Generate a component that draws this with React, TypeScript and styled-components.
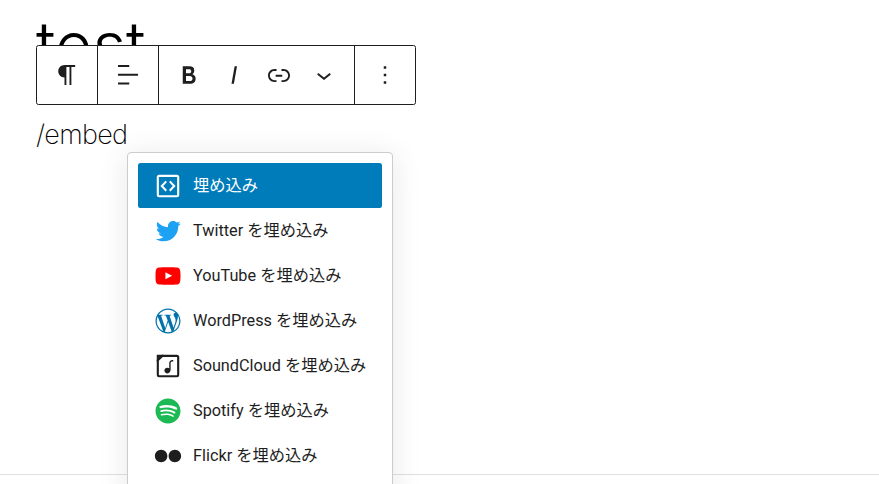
import React from 'react';
import styled, { createGlobalStyle } from 'styled-components';

const GlobalStyle = createGlobalStyle`
  html, body {
    margin: 0;
    padding: 0;
    background: #fff;
  }
`;

const Page = styled.div`
  position: relative;
  display: grid;
  grid-template-rows: 474px 10px;
  width: 879px;
  height: 484px;
  overflow: hidden;
  font-family: Inter, "Liberation Sans", sans-serif;
  color: #1e1e1e;
`;

const Canvas = styled.main`
  padding: 0 0 0 36px;
  color: #000;
`;

const Title = styled.h1`
  margin: 0;
  height: 118px;
  padding-top: 8px;
  box-sizing: border-box;
  font-size: 65px;
  line-height: 76px;
  font-weight: 300;
`;

const Paragraph = styled.p`
  margin: 0;
  font-size: 27px;
  line-height: 34px;
  font-weight: 200;
  letter-spacing: -0.7px;
`;

const Footer = styled.footer`
  border-top: 1px solid #e0e0e0;
  background: #fff;
`;

const Toolbar = styled.div`
  position: absolute;
  top: 45px;
  left: 36px;
  display: flex;
  height: 60px;
  box-sizing: border-box;
  border: 1.25px solid #1e1e1e;
  border-radius: 2.5px;
  background: #fff;
`;

const ToolGroup = styled.div<{ $padded?: boolean }>`
  display: flex;
  align-items: center;
  padding: ${(p) => (p.$padded ? '0 7.5px' : '0')};
  border-right: 1.25px solid #1e1e1e;

  &:last-child {
    border-right: none;
  }
`;

const ToolButton = styled.button<{ $wide?: boolean }>`
  display: flex;
  align-items: center;
  justify-content: center;
  width: ${(p) => (p.$wide ? '60px' : '45px')};
  height: 100%;
  padding: 0;
  border: none;
  background: none;
  color: #1e1e1e;

  svg {
    width: 30px;
    height: 30px;
    fill: currentColor;
  }
`;

const Popover = styled.div`
  position: absolute;
  top: 152px;
  left: 127px;
  width: 266px;
  height: 360px;
  box-sizing: border-box;
  padding: 10px;
  border: 1px solid #ccc;
  border-radius: 4px;
  background: #fff;
  box-shadow: 0 3px 30px rgba(25, 30, 35, 0.1);
`;

const Option = styled.div<{ $selected?: boolean }>`
  display: flex;
  align-items: center;
  gap: 10px;
  height: 45px;
  padding-left: 15px;
  border-radius: 2.5px;
  background: ${(p) => (p.$selected ? '#007cba' : 'transparent')};
  color: ${(p) => (p.$selected ? '#fff' : '#1e1e1e')};
  font-family: Roboto, "Noto Sans CJK JP", sans-serif;
  font-size: 16.25px;
  white-space: nowrap;

  svg {
    flex: none;
    width: 30px;
    height: 30px;
    fill: currentColor;
  }
`;

const OptionLabel = styled.span`
  margin-top: -3px;
`;

const icons = {
  embed: (
    <svg viewBox="0 0 24 24">
      <path d="M5 3h14a2 2 0 0 1 2 2v14a2 2 0 0 1-2 2H5a2 2 0 0 1-2-2V5a2 2 0 0 1 2-2zm0 1.7a.3.3 0 0 0-.3.3v14c0 .2.1.3.3.3h14c.2 0 .3-.1.3-.3V5a.3.3 0 0 0-.3-.3H5z" />
      <path d="M10 7.7 5.9 12l4.1 4.3 1.2-1.1L8.2 12l3-3.2zM14 7.7l-1.2 1.1 3 3.2-3 3.2 1.2 1.1 4.1-4.3z" />
    </svg>
  ),
  twitter: (
    <svg viewBox="0 0 24 24" style={{ fill: '#1da1f2' }}>
      <path d="M22.23 5.924c-.736.326-1.527.547-2.357.646.847-.508 1.498-1.312 1.804-2.27-.793.47-1.67.812-2.606.996C18.325 4.484 17.258 4 16.078 4c-2.266 0-4.103 1.837-4.103 4.103 0 .322.036.635.106.935-3.41-.17-6.433-1.804-8.457-4.287-.353.607-.556 1.312-.556 2.064 0 1.424.724 2.68 1.825 3.415-.673-.022-1.305-.207-1.86-.514v.052c0 1.988 1.415 3.647 3.293 4.023-.344.095-.707.145-1.08.145-.265 0-.522-.026-.773-.074.522 1.63 2.038 2.817 3.833 2.85-1.404 1.1-3.174 1.757-5.096 1.757-.332 0-.66-.02-.98-.057 1.816 1.164 3.973 1.843 6.29 1.843 7.547 0 11.675-6.252 11.675-11.675 0-.178-.004-.355-.012-.53.802-.578 1.497-1.3 2.047-2.132z" />
    </svg>
  ),
  youtube: (
    <svg viewBox="0 0 24 24" style={{ fill: '#f00' }}>
      <path d="M21.8 8s-.195-1.377-.795-1.984c-.76-.797-1.613-.8-2.004-.847-2.798-.203-6.996-.203-6.996-.203h-.01s-4.197 0-6.996.202c-.39.046-1.242.05-2.003.846C2.395 6.623 2.2 8 2.2 8S2 9.62 2 11.24v1.517c0 1.618.2 3.237.2 3.237s.195 1.378.795 1.985c.76.797 1.76.77 2.205.855 1.6.153 6.8.2 6.8.2s4.203-.005 7-.208c.392-.047 1.244-.05 2.005-.847.6-.607.795-1.985.795-1.985s.2-1.618.2-3.237v-1.517C22 9.62 21.8 8 21.8 8zM9.935 14.595v-5.62l5.403 2.82-5.403 2.8z" />
    </svg>
  ),
  wordpress: (
    <svg viewBox="0 0 24 24" style={{ fill: '#0073aa' }}>
      <path d="M12.158,12.786L9.46,20.625c0.806,0.237,1.657,0.366,2.54,0.366c1.047,0,2.051-0.181,2.986-0.51 c-0.024-0.038-0.046-0.079-0.065-0.124L12.158,12.786z M3.009,12c0,3.559,2.068,6.634,5.067,8.092L3.788,8.341 C3.289,9.459,3.009,10.696,3.009,12z M18.069,11.546c0-1.112-0.399-1.881-0.741-2.48c-0.456-0.741-0.883-1.368-0.883-2.109 c0-0.826,0.627-1.596,1.51-1.596c0.04,0,0.078,0.005,0.116,0.007C16.472,3.904,14.34,3.009,12,3.009 c-3.141,0-5.904,1.612-7.512,4.052c0.211,0.007,0.41,0.011,0.579,0.011c0.94,0,2.396-0.114,2.396-0.114 C7.947,6.93,8.004,7.642,7.52,7.699c0,0-0.487,0.057-1.029,0.085l3.274,9.739l1.968-5.901l-1.401-3.838 C9.848,7.756,9.389,7.699,9.389,7.699C8.904,7.67,8.961,6.93,9.446,6.958c0,0,1.484,0.114,2.368,0.114 c0.94,0,2.397-0.114,2.397-0.114c0.485-0.028,0.542,0.684,0.057,0.741c0,0-0.488,0.057-1.029,0.085l3.249,9.665l0.897-2.996 C17.841,13.284,18.069,12.316,18.069,11.546z M19.889,7.686c0.039,0.286,0.06,0.593,0.06,0.924c0,0.912-0.171,1.938-0.684,3.22 l-2.746,7.94c2.673-1.558,4.47-4.454,4.47-7.771C20.991,10.436,20.591,8.967,19.889,7.686z M12,22C6.486,22,2,17.514,2,12 C2,6.486,6.486,2,12,2c5.514,0,10,4.486,10,10C22,17.514,17.514,22,12,22z" />
    </svg>
  ),
  soundcloud: (
    <svg viewBox="0 0 24 24">
      <path fillRule="evenodd" d="M7 3h12a2 2 0 0 1 2 2v14a2 2 0 0 1-2 2H5a2 2 0 0 1-2-2V7zm.8 1.7L4.7 7.8V19c0 .2.1.3.3.3h14c.2 0 .3-.1.3-.3V5c0-.2-.1-.3-.3-.3z" />
      <path d="M3 3h5.5L3 8.5z" />
      <path d="M15.9 7.2c-.8 0-1.7.1-2.3.7-.4.4-.6 1-.6 1.7v4.2c-.4-.3-.9-.5-1.5-.5-1.3 0-2.4 1-2.4 2.3s1.1 2.3 2.4 2.3c1 0 1.9-.6 2.2-1.5.3-.5.4-1.2.4-1.7V9.6c0-.4.1-.7.3-.9.3-.3.9-.3 1.5-.3h.3V7.2h-.3z" />
    </svg>
  ),
  spotify: (
    <svg viewBox="0 0 24 24" style={{ fill: '#1db954' }}>
      <path d="M12,2C6.477,2,2,6.477,2,12c0,5.523,4.477,10,10,10c5.523,0,10-4.477,10-10C22,6.477,17.523,2,12,2 M16.586,16.424 c-0.18,0.295-0.563,0.387-0.857,0.207c-2.348-1.435-5.304-1.76-8.785-0.964c-0.335,0.077-0.67-0.133-0.746-0.469 c-0.077-0.335,0.132-0.67,0.469-0.746c3.809-0.871,7.077-0.496,9.713,1.115C16.673,15.746,16.766,16.13,16.586,16.424 M17.81,13.7 c-0.226,0.367-0.706,0.482-1.072,0.257c-2.687-1.652-6.785-2.131-9.965-1.166C6.36,12.917,5.925,12.684,5.8,12.273 C5.675,11.86,5.908,11.425,6.32,11.3c3.632-1.102,8.147-0.568,11.234,1.328C17.92,12.854,18.035,13.335,17.81,13.7 M17.915,10.865 c-3.223-1.914-8.54-2.09-11.618-1.156C5.804,9.859,5.281,9.58,5.131,9.086c-0.149-0.495,0.129-1.017,0.624-1.167 c3.532-1.073,9.404-0.866,13.115,1.337c0.445,0.264,0.59,0.838,0.327,1.282C18.933,10.983,18.359,11.129,17.915,10.865" />
    </svg>
  ),
  flickr: (
    <svg viewBox="0 0 24 24">
      <path d="m6.5 7c-2.75 0-5 2.25-5 5s2.25 5 5 5 5-2.25 5-5-2.25-5-5-5zm11 0c-2.75 0-5 2.25-5 5s2.25 5 5 5 5-2.25 5-5-2.25-5-5-5z" />
    </svg>
  ),
};

const options = [
  { label: '埋め込み', icon: icons.embed, selected: true },
  { label: 'Twitter を埋め込み', icon: icons.twitter },
  { label: 'YouTube を埋め込み', icon: icons.youtube },
  { label: 'WordPress を埋め込み', icon: icons.wordpress },
  { label: 'SoundCloud を埋め込み', icon: icons.soundcloud },
  { label: 'Spotify を埋め込み', icon: icons.spotify },
  { label: 'Flickr を埋め込み', icon: icons.flickr },
];

const App: React.FC = () => {
  return (
    <Page>
      <GlobalStyle />
      <Canvas>
        <Title>test</Title>
        <Paragraph>/embed</Paragraph>
      </Canvas>
      <Footer />

      <Toolbar>
        <ToolGroup>
          <ToolButton $wide aria-label="段落">
            <svg viewBox="0 0 24 24">
              <path d="m9.99609 14v-.2251l.00391.0001v6.225h1.5v-14.5h2.5v14.5h1.5v-14.5h3v-1.5h-8.50391c-2.76142 0-5 2.23858-5 5 0 2.7614 2.23858 5 5 5z" />
            </svg>
          </ToolButton>
        </ToolGroup>
        <ToolGroup>
          <ToolButton $wide aria-label="配置">
            <svg viewBox="0 0 24 24">
              <path d="M13 5.5H4V4h9v1.5Zm7 7H4V11h16v1.5Zm-7 7H4V18h9v1.5Z" />
            </svg>
          </ToolButton>
        </ToolGroup>
        <ToolGroup $padded>
          <ToolButton aria-label="太字">
            <svg viewBox="0 0 24 24">
              <path d="M14.7 11.3c1-.6 1.5-1.6 1.5-3 0-2.3-1.3-3.4-4-3.4H7v14h5.8c1.4 0 2.5-.3 3.3-1 .8-.7 1.2-1.7 1.2-2.9.1-1.9-.8-3.1-2.6-3.7zm-5.1-4h2.3c.6 0 1.1.1 1.4.4.3.3.5.7.5 1.2s-.2 1-.5 1.2c-.3.3-.8.4-1.4.4H9.6V7.3zm4.6 9c-.4.3-1 .4-1.7.4H9.6v-3.9h2.9c.7 0 1.3.2 1.7.5.4.3.6.8.6 1.5s-.2 1.2-.6 1.5z" />
            </svg>
          </ToolButton>
          <ToolButton aria-label="イタリック">
            <svg viewBox="0 0 24 24">
              <path d="M12.5 5L10 19h1.9l2.5-14z" />
            </svg>
          </ToolButton>
          <ToolButton aria-label="リンク">
            <svg viewBox="0 0 24 24">
              <path d="M15.6 7.2H14v1.5h1.6c2 0 3.7 1.7 3.7 3.7s-1.7 3.7-3.7 3.7H14v1.5h1.6c2.8 0 5.2-2.3 5.2-5.2 0-2.9-2.3-5.2-5.2-5.2zM4.7 12.4c0-2 1.7-3.7 3.7-3.7H10V7.2H8.4c-2.9 0-5.2 2.3-5.2 5.2 0 2.9 2.3 5.2 5.2 5.2H10v-1.5H8.4c-2 0-3.7-1.7-3.7-3.7zm4.6.9h5.3v-1.5H9.3v1.5z" />
            </svg>
          </ToolButton>
          <ToolButton aria-label="その他">
            <svg viewBox="0 0 24 24">
              <path d="M17.5 11.6L12 16l-5.5-4.4.9-1.2L12 14l4.5-3.6 1 1.2z" />
            </svg>
          </ToolButton>
        </ToolGroup>
        <ToolGroup>
          <ToolButton $wide aria-label="オプション">
            <svg viewBox="0 0 24 24">
              <path d="M13 19h-2v-2h2v2zm0-6h-2v-2h2v2zm0-6h-2V5h2v2z" />
            </svg>
          </ToolButton>
        </ToolGroup>
      </Toolbar>

      <Popover>
        {options.map((option) => (
          <Option key={option.label} $selected={option.selected}>
            {option.icon}
            <OptionLabel>{option.label}</OptionLabel>
          </Option>
        ))}
      </Popover>
    </Page>
  );
};

export default App;
